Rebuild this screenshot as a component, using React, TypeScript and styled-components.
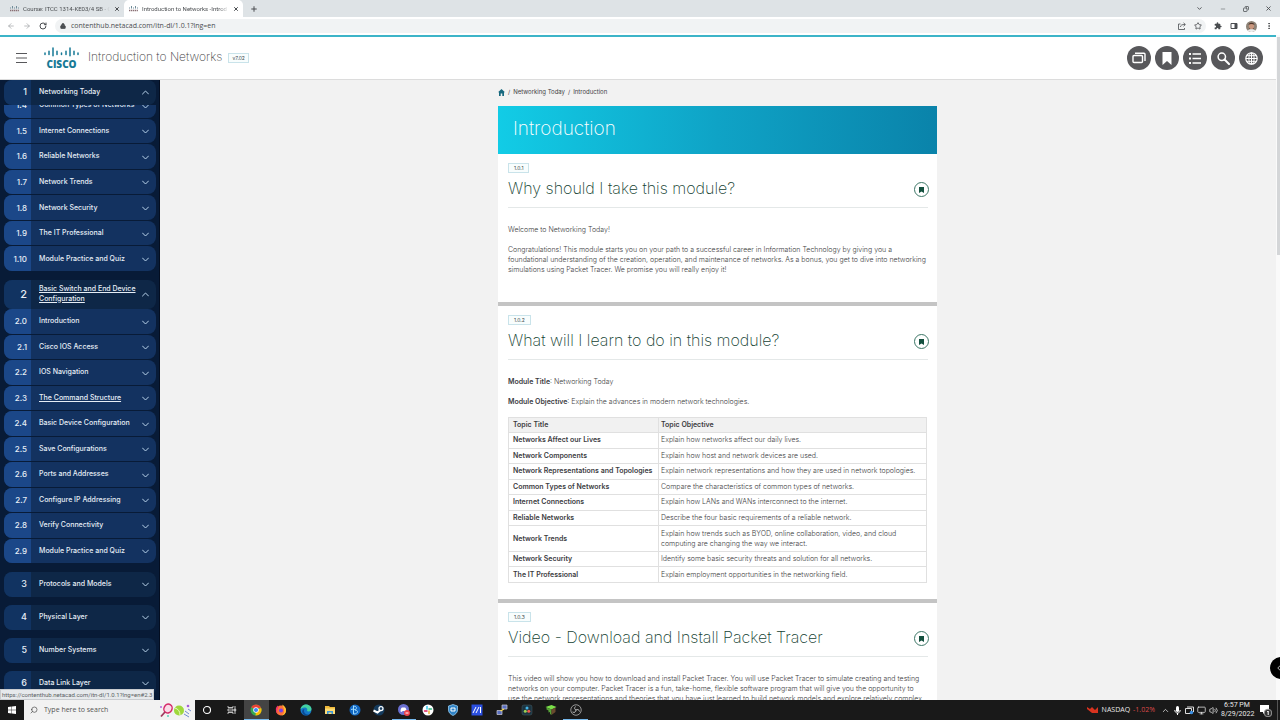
import React from "react";
import styled, { createGlobalStyle } from "styled-components";
import {
  ArrowLeft, ArrowRight, ChevronDown, ChevronLeft, ChevronUp, Lock, Minus, Monitor, MoreVertical,
  Plus, RotateCw, Search, Star, Volume2, X, Copy,
} from "lucide-react";

const ui = `"Open Sans", "Noto Sans", sans-serif`;
const brand = `Inter, "Liberation Sans", sans-serif`;

const Global = createGlobalStyle`
  * { box-sizing: border-box; }
  html, body { margin: 0; padding: 0; overflow: hidden; }
  body { font-family: ${brand}; font-size: 7px; line-height: 10px; color: #3e3e42; background: #f2f2f2; }
  button { border: 0; padding: 0; margin: 0; background: none; color: inherit; font: inherit; display: inline-flex; align-items: center; justify-content: center; cursor: pointer; }
  input { border: 0; padding: 0; margin: 0; background: none; font: inherit; color: inherit; outline: 0; min-width: 0; }
  a { color: inherit; text-decoration: none; }
  h1, h2, p, ul, ol { margin: 0; padding: 0; }
  ul, ol { list-style: none; }
  svg { display: block; flex: none; }
`;

const Screen = styled.div`
  height: 100vh;
  display: flex;
  flex-direction: column;
`;

/* ---------- browser window ---------- */
const TabStrip = styled.div`
  display: flex;
  align-items: stretch;
  height: 17px;
  padding-left: 8px;
  background: #dee3e6;
  font-family: Roboto, ${ui};
  font-size: 6px;
  color: #4a4d50;
`;
const Tab = styled.div<{ $active?: boolean }>`
  display: flex;
  align-items: center;
  gap: 4px;
  width: ${(p) => (p.$active ? 119 : 116)}px;
  padding: 0 4px 0 ${(p) => (p.$active ? 5 : 2)}px;
  border-radius: 5px 5px 0 0;
  background: ${(p) => (p.$active ? "#fff" : "transparent")};
`;
const TabTitle = styled.span`
  flex: 1;
  overflow: hidden;
  white-space: nowrap;
  -webkit-mask-image: linear-gradient(90deg, #000 88%, transparent);
  mask-image: linear-gradient(90deg, #000 88%, transparent);
`;
const NewTab = styled.button`
  margin-left: 7px;
`;
const WindowButtons = styled.div`
  display: flex;
  align-items: center;
  margin-left: auto;
  button { width: 23px; height: 14px; }
`;
const Toolbar = styled.div`
  display: flex;
  align-items: center;
  height: 18px;
  padding: 0 7px 0 7px;
  gap: 8px;
  background: #fff;
  color: #4a4d50;
  font-family: ${ui};
`;
const Omnibox = styled.div`
  flex: 1;
  display: flex;
  align-items: center;
  gap: 5px;
  height: 14px;
  padding: 0 4px 0 5px;
  border-radius: 7px;
  background: #f1f3f4;
  input { flex: 1; }
`;
const OmniActions = styled.div`
  display: flex;
  gap: 8px;
`;

/* ---------- course page ---------- */
const Viewport = styled.div`
  flex: 1;
  min-height: 0;
  display: flex;
  position: relative;
  overflow: hidden;
`;
const Page = styled.div`
  flex: 1;
  min-width: 0;
  display: flex;
  flex-direction: column;
`;
const ScrollTrack = styled.div`
  width: 4px;
  padding: 2px 0;
  background: #fafafa;
`;
const ScrollThumb = styled.div`
  height: 218px;
  width: 3px;
  margin-left: 1px;
  background: #d4d6d8;
`;
const PageHeader = styled.header`
  display: flex;
  align-items: center;
  height: 45px;
  padding: 0 13px 0 16px;
  border-top: 2px solid #3cb4c8;
  border-bottom: 1px solid #dcdcdc;
  background: #fff;
`;
const Logo = styled.a`
  display: flex;
  flex-direction: column;
  align-items: center;
  gap: 2px;
  margin-left: 17px;
  color: #177a96;
  font-family: "Open Sans", sans-serif;
  font-size: 10px;
  font-weight: 800;
  line-height: 10px;
`;
const CourseTitle = styled.span`
  margin: 0 6px 2px 9px;
  font-size: 12px;
  line-height: 16px;
  font-weight: 200;
`;
const Badge = styled.span<{ $wide?: boolean }>`
  display: inline-block;
  padding: 0 ${(p) => (p.$wide ? 5 : 3)}px;
  border: 1px solid #c9e3ea;
  background: #f8fdfd;
  font-size: 5px;
  line-height: 8px;
  color: #3b4a4c;
`;
const HeaderTools = styled.nav`
  display: flex;
  gap: 4px;
  margin-left: auto;
`;
const RoundButton = styled.button`
  width: 24px;
  height: 24px;
  border-radius: 50%;
  background: #58585b;
  color: #fff;
`;
const Columns = styled.div`
  flex: 1;
  min-height: 0;
  display: flex;
`;

/* ---------- course outline ---------- */
const Sidebar = styled.nav`
  width: 160px;
  margin-right: -1px;
  overflow: hidden;
  display: flex;
  flex-direction: column;
  gap: 8px;
  padding: 0 3px 0 4px;
  border-right: 1px solid #030d20;
  background: #081b37;
  color: #e6edf6;
  font-weight: 500;
  z-index: 1;
`;
const Module = styled.div`
  flex: none;
`;
const Row = styled.button<{ $kind: "module" | "topic"; $tall?: boolean }>`
  display: flex;
  width: 100%;
  min-height: ${(p) => (p.$tall ? 29 : p.$kind === "module" ? 25 : 24)}px;
  border-radius: 8px;
  overflow: hidden;
  text-align: left;
  align-items: stretch;
  background: ${(p) => (p.$kind === "module" ? "#0e2747" : "#133260")};
  > span { padding-bottom: ${(p) => (p.$kind === "module" ? 2 : 0)}px; }
  > span:first-child {
    background: ${(p) => (p.$kind === "module" ? "#113361" : "#1b4788")};
    font-size: ${(p) => (p.$tall ? 11 : p.$kind === "module" ? 9 : 8)}px;
  }
`;
const RowNumber = styled.span`
  display: flex;
  align-items: center;
  justify-content: flex-end;
  width: 27px;
  padding-right: 4px;
`;
const RowTitle = styled.span<{ $linked?: boolean }>`
  flex: 1;
  display: flex;
  align-items: center;
  padding-left: 8px;
  line-height: 10px;
  text-decoration: ${(p) => (p.$linked ? "underline" : "none")};
`;
const RowChevron = styled.span`
  display: flex;
  align-items: center;
  padding: 2px 7px 0 0;
  color: #b9d3ea;
`;
const TopicWindow = styled.div<{ $height: number }>`
  display: flex;
  flex-direction: column;
  justify-content: flex-end;
  height: ${(p) => p.$height}px;
  overflow: hidden;
`;
const Topics = styled.ol<{ $height: number }>`
  flex: none;
  display: grid;
  grid-auto-rows: 1fr;
  height: ${(p) => p.$height}px;
  li { display: flex; padding-bottom: 1px; }
`;

/* ---------- lesson ---------- */
const Main = styled.main`
  flex: 1;
  min-width: 0;
  overflow: hidden;
  background: #f2f2f2;
`;
const Lesson = styled.div`
  max-width: 439px;
  margin: 0 auto;
`;
const Crumbs = styled.nav`
  display: flex;
  align-items: center;
  gap: 3px;
  height: 26px;
  padding-bottom: 2px;
  font-size: 6px;
  a:first-child { color: #17697f; }
`;
const Banner = styled.div`
  height: 48px;
  padding: 11px 15px;
  background: linear-gradient(90deg, #12cce6, #0fa3c6 50%, #0a83aa);
  color: #fff;
  h1 { font-size: 19px; line-height: 24px; font-weight: 200; }
`;
const Section = styled.section`
  padding: 9px 10px 0;
  background: #fff;
  border-bottom: 4px solid #c4c4c4;
`;
const SectionHead = styled.div`
  display: flex;
  align-items: center;
  justify-content: space-between;
  height: 35px;
  padding-bottom: 4px;
  margin-right: -1px;
  margin-bottom: 17px;
  border-bottom: 1px solid #e4e8e8;
  h2 { font-size: 16px; line-height: 20px; font-weight: 200; color: #143f32; }
`;
const MarkButton = styled.button`
  width: 15px;
  height: 15px;
  margin: 3px -1px 0 0;
  border: 1px solid #3d7767;
  border-radius: 50%;
  color: #14503f;
`;
const Para = styled.p<{ $gap?: number }>`
  margin-bottom: ${(p) => p.$gap ?? 10}px;
  font-weight: 300;
  white-space: nowrap;
  b { font-weight: 600; color: #3c3c3f; }
`;
const Topicsheet = styled.table`
  width: 419px;
  max-width: 100%;
  height: 166px;
  margin-bottom: 16px;
  border-collapse: collapse;
  th, td { border: 1px solid #e0e0e0; padding: 2px; text-align: left; line-height: 10px; font-weight: 300; }
  th { font-weight: 600; color: #3c3c3f; }
  th:first-child { width: 150px; padding-left: 4px; white-space: nowrap; }
  thead th { background: #f1f1f1; }
`;

/* ---------- overlays ---------- */
const StatusBubble = styled.div`
  position: absolute;
  z-index: 2;
  left: 0;
  bottom: 0;
  padding: 0 1px;
  border: 1px solid #c9ccd0;
  background: #e6e9ec;
  color: #5b5f64;
  font-family: Roboto, ${ui};
  font-size: 6px;
  line-height: 9px;
`;
const SideHandle = styled.button`
  position: absolute;
  right: -12px;
  bottom: 21px;
  width: 22px;
  height: 22px;
  padding-left: 4px;
  justify-content: flex-start;
  border-radius: 50%;
  background: #000;
  color: #ddd;
`;

/* ---------- taskbar ---------- */
const Taskbar = styled.footer`
  display: flex;
  align-items: stretch;
  height: 20px;
  background: #191919;
  color: #e8e8e8;
  font-family: ${ui};
`;
const StartButton = styled.button`
  width: 24px;
`;
const TaskSearch = styled.label`
  display: flex;
  align-items: center;
  gap: 6px;
  width: 171px;
  padding: 0 3px 0 6px;
  background: #f2f2f2;
  color: #444;
  input { flex: 1; }
  input::placeholder { color: #555; opacity: 1; }
`;
const MirroredSearch = styled(Search)`
  transform: scaleX(-1);
`;
const RestoreIcon = styled(Copy)`
  transform: scaleX(-1);
`;
const Apps = styled.div`
  display: grid;
  grid-template-columns: repeat(16, 1fr);
  width: 393px;
`;
const AppButton = styled.button<{ $state?: "open" | "active" }>`
  border-bottom: 1px solid ${(p) => (p.$state ? "#76b9ed" : "transparent")};
  border-top: 1px solid ${(p) => (p.$state === "active" ? "#444" : "transparent")};
  background: ${(p) => (p.$state === "active" ? "#444" : "none")};
`;
const Tray = styled.div`
  display: flex;
  align-items: center;
  gap: 3px;
  margin-left: auto;
  padding-right: 2px;
`;
const Fall = styled.span`
  color: #dc4a4a;
  margin-right: 3px;
`;
const Clock = styled.div`
  width: 32px;
  text-align: center;
  font-family: Roboto, ${ui};
  line-height: 9px;
`;
const Notice = styled.button`
  width: 18px;
  height: 20px;
`;
const DesktopEdge = styled.div`
  align-self: stretch;
  width: 1px;
  background: #555;
`;

const CiscoMark = ({ w, color = "currentColor" }: { w: number; color?: string }) => (
  <svg width={w} height={(w * 10) / 35} viewBox="0 0 35 10" stroke={color} strokeWidth="1.5" strokeLinecap="round">
    <path d="M1 6v1.6M5 4.2v3.4M9 1v7.8M13 4.2v3.4M17.5 6v1.6M22 4.2v3.4M26 1v7.8M30 4.2v3.4M34 6v1.6" />
  </svg>
);

const TabMark = () => (
  <svg width="9" height="6" viewBox="0 0 9 6" fill="none">
    <path d="M.5 1.500v1M2.500 0v2.500M4.500 1.500v1M6.500 0v2.500M8.500 1.500v1" stroke="#6f8b98" />
    <path d="M0 4.500h9" stroke="#8a6f74" strokeWidth="1.500" strokeDasharray="1.300 .6" />
  </svg>
);

const Chev = ({ up }: { up?: boolean }) => (
  <svg width="7" height="5" viewBox="0 0 7 5" fill="none" stroke="currentColor" strokeWidth="1" strokeLinecap="round" strokeLinejoin="round">
    <path d={up ? "M.5 4 3.5 1l3 3" : "M.5 1l3 3 3-3"} />
  </svg>
);

const OutlineRow = ({ n, title, open, linked, kind }: { n: string; title: string; open?: boolean; linked?: boolean; kind: "module" | "topic" }) => (
  <Row $kind={kind} $tall={kind === "module" && linked} aria-expanded={!!open}>
    <RowNumber>{n}</RowNumber>
    <RowTitle $linked={linked}>{title}</RowTitle>
    <RowChevron><Chev up={open} /></RowChevron>
  </Row>
);

const first = [
  ["1.4", "Common Types of Networks"], ["1.5", "Internet Connections"], ["1.6", "Reliable Networks"],
  ["1.7", "Network Trends"], ["1.8", "Network Security"], ["1.9", "The IT Professional"], ["1.10", "Module Practice and Quiz"],
];
const second = [
  ["2.0", "Introduction"], ["2.1", "Cisco IOS Access"], ["2.2", "IOS Navigation"], ["2.3", "The Command Structure"],
  ["2.4", "Basic Device Configuration"], ["2.5", "Save Configurations"], ["2.6", "Ports and Addresses"],
  ["2.7", "Configure IP Addressing"], ["2.8", "Verify Connectivity"], ["2.9", "Module Practice and Quiz"],
];
const rest = [["3", "Protocols and Models"], ["4", "Physical Layer"], ["5", "Number Systems"], ["6", "Data Link Layer"]];

const objectives = [
  ["Networks Affect our Lives", "Explain how networks affect our daily lives."],
  ["Network Components", "Explain how host and network devices are used."],
  ["Network Representations and Topologies", "Explain network representations and how they are used in network topologies."],
  ["Common Types of Networks", "Compare the characteristics of common types of networks."],
  ["Internet Connections", "Explain how LANs and WANs interconnect to the internet."],
  ["Reliable Networks", "Describe the four basic requirements of a reliable network."],
  ["Network Trends", "Explain how trends such as BYOD, online collaboration, video, and cloud computing are changing the way we interact."],
  ["Network Security", "Identify some basic security threats and solution for all networks."],
  ["The IT Professional", "Explain employment opportunities in the networking field."],
];

const Topic = ({ id, title }: { id: string; title: string }) => (
  <>
    <Badge $wide>{id}</Badge>
    <SectionHead>
      <h2>{title}</h2>
      <MarkButton aria-label="Bookmark section">
        <svg width="5" height="6" viewBox="0 0 5 6" fill="currentColor"><path d="M0 0h5v6L2.5 4.4 0 6z" /></svg>
      </MarkButton>
    </SectionHead>
  </>
);

const apps: { name: string; state?: "open" | "active"; art: React.ReactNode }[] = [
  { name: "Cortana", art: <circle cx="12" cy="12" r="7" fill="none" stroke="#fff" strokeWidth="2.2" /> },
  { name: "Task View", art: <path d="M4 4v3h10V4M4 20v-3h10v3M4 10h10v4H4zM18 4v16M16.500 10.500h3v3h-3z" fill="none" stroke="#ddd" strokeWidth="1.700" /> },
  { name: "Chrome", state: "active", art: <><circle cx="12" cy="12" r="11" fill="#34a853" /><path d="M12 12 2.500 6.500A11 11 0 0 1 21.500 6.500L22 8H12z" fill="#ea4335" /><path d="M12 12 22.300 8A11 11 0 0 1 11 23z" fill="#fbbc05" /><circle cx="12" cy="12" r="5.500" fill="#fff" /><circle cx="12" cy="12" r="4.200" fill="#4285f4" /></> },
  { name: "Firefox", art: <><circle cx="12" cy="13" r="10" fill="#ff7139" /><path d="M14 1c6 3 9 8 8 13-1 6-5 9-9 9 6-3 8-10 1-22z" fill="#ffbd2f" /><path d="M2 8c1-2 2-3 3-5l2 4c-3 3-4 9-1 13-4-3-5-8-4-12z" fill="#f5316b" /><circle cx="12" cy="13" r="4" fill="#7542e5" /></> },
  { name: "Edge", art: <><circle cx="12" cy="12" r="11" fill="#1478c9" /><path d="M1 11C2 4 7 1 12 1c7 0 11 5 11 9 0 5-7 6-9 4 2-4-1-7-5-7-4 0-7 2-8 4z" fill="#44d1a0" /><path d="M9 10c-3 5 1 12 9 11-3 2-7 2-10 1-5-4-5-11 1-12z" fill="#0b4a92" /></> },
  { name: "File Explorer", art: <><path d="M2 4h8l2 2h10v14H2z" fill="#f0b93a" /><path d="M2 9h20v11H2z" fill="#ffdc74" /><path d="M6 14h12v6h-3v-3H9v3H6z" fill="#3c96d8" /></> },
  { name: "Battle.net", art: <><circle cx="12" cy="12" r="11" fill="#1268c4" /><path d="M9 3v17M9 5c6-2 8 4 3 7 7 0 7 8-3 8M4 11c3-1 6-1 9 1" stroke="#9fdcff" strokeWidth="2" fill="none" /></> },
  { name: "Steam", art: <><circle cx="12" cy="12" r="11" fill="#153b5d" /><path d="M1 13l8 4 6-5" stroke="#fff" strokeWidth="4" fill="none" /><circle cx="16" cy="9" r="4" fill="#153b5d" stroke="#fff" strokeWidth="2.500" /></> },
  { name: "Discord", state: "open", art: <><circle cx="11" cy="11" r="11" fill="#6a6fd0" /><path d="M5 15c0-4 1-7 3-8h6c2 1 3 4 3 8l-3 1-1-2H9l-1 2z" fill="#fff" /><circle cx="18" cy="18" r="6" fill="#ec4149" /><path d="M15 18h6" stroke="#fff" strokeWidth="2" /></> },
  { name: "Slack", art: <><circle cx="12" cy="12" r="11" fill="#fff" /><g strokeWidth="3" strokeLinecap="round"><path d="M10 5v5" stroke="#36c5f0" /><path d="M14 10h5" stroke="#2eb67d" /><path d="M14 14v5" stroke="#ecb22e" /><path d="M5 14h5" stroke="#e01e5a" /></g></> },
  { name: "Security", art: <><path d="M12 1 21 4v8c0 6-5 9-9 11-4-2-9-5-9-11V4z" fill="#2f83c6" stroke="#9ed3f5" strokeWidth="1.500" /><path d="M8 8h8v6H8z" fill="none" stroke="#fff" strokeWidth="2" /></> },
  { name: "Armoury", art: <><path d="M1 1h22v22H1z" fill="#2b4fe0" /><path d="M4 18 10 6M10 18l6-12M19 6v12" fill="none" stroke="#fff" strokeWidth="2" /></> },
  { name: "PuTTY", art: <><path d="M12 2h10v8H12zM2 13h10v8H2z" fill="#5a6fc0" stroke="#c8c8d0" strokeWidth="1.500" /><path d="M16 10 9 14" stroke="#ffe14a" strokeWidth="2.500" /></> },
  { name: "DaVinci Resolve", art: <><rect x="2" y="2" width="20" height="20" rx="4" fill="#1b3340" stroke="#47606a" /><circle cx="12" cy="8" r="3" fill="#45b4e8" /><circle cx="8.500" cy="14.500" r="3" fill="#9ed052" /><circle cx="15.500" cy="14.500" r="3" fill="#ef5a4c" /></> },
  { name: "Minecraft", art: <><path d="M1 6 13 2l10 4-10 5z" fill="#7be04a" /><path d="M3 7l10 4v11l-3-2v-4l-3 1v-4l-4-2z" fill="#57a337" /><path d="M13 11l8-4v9l-8 6z" fill="#6a4a2e" /></> },
  { name: "OBS Studio", state: "open", art: <><circle cx="12" cy="12" r="10.500" fill="#1c1c1c" stroke="#bbb" strokeWidth="1.500" /><path d="M12 12c-3-1-4-4-1-7M12 12c3-2 6-1 7 3M12 12c0 4-3 6-7 4" stroke="#bbb" strokeWidth="2" fill="none" /></> },
];

export default function App() {
  return (
    <Screen>
      <Global />
      <TabStrip>
        <Tab>
          <TabMark />
          <TabTitle>Course: ITCC 1314-KE03/4 SB - C</TabTitle>
          <button aria-label="Close tab"><X size={6} strokeWidth={4} /></button>
        </Tab>
        <Tab $active>
          <TabMark />
          <TabTitle>Introduction to Networks -Introd</TabTitle>
          <button aria-label="Close tab"><X size={6} strokeWidth={4} /></button>
        </Tab>
        <NewTab aria-label="New tab"><Plus size={8} strokeWidth={3} /></NewTab>
        <WindowButtons>
          <button aria-label="Search tabs"><ChevronDown size={7} strokeWidth={3} /></button>
          <button aria-label="Minimize"><Minus size={6} /></button>
          <button aria-label="Restore"><RestoreIcon size={6} strokeWidth={3} /></button>
          <button aria-label="Close"><X size={7} strokeWidth={3} /></button>
        </WindowButtons>
      </TabStrip>
      <Toolbar>
        <button aria-label="Back"><ArrowLeft size={8} color="#9a9da0" /></button>
        <button aria-label="Forward"><ArrowRight size={8} color="#9a9da0" /></button>
        <button aria-label="Reload"><RotateCw size={8} strokeWidth={3} /></button>
        <Omnibox>
          <Lock size={6} strokeWidth={3} fill="currentColor" />
          <input aria-label="Address" defaultValue="contenthub.netacad.com/itn-dl/1.0.1?lng=en" />
          <OmniActions>
            <button aria-label="Share">
              <svg width="8" height="8" viewBox="0 0 8 8" fill="none" stroke="currentColor" strokeWidth=".8"><path d="M2.500 2H.5v5.500h6V6M2.500 5c0-2 1.500-2.500 4.500-2.500M5.500.8 7.400 2.500 5.500 4.300" /></svg>
            </button>
            <button aria-label="Bookmark page"><Star size={8} strokeWidth={2.5} /></button>
          </OmniActions>
        </Omnibox>
        <button aria-label="Extensions">
          <svg width="8" height="8" viewBox="0 0 24 24" fill="currentColor"><path d="M20.500 11H19V7a2 2 0 0 0-2-2h-4V3.500a2.500 2.500 0 0 0-5 0V5H4a2 2 0 0 0-2 2v3.800h1.500a2.700 2.700 0 0 1 0 5.400H2V20a2 2 0 0 0 2 2h3.800v-1.500a2.700 2.700 0 0 1 5.400 0V22H17a2 2 0 0 0 2-2v-4h1.500a2.500 2.500 0 0 0 0-5z" /></svg>
        </button>
        <button aria-label="Side panel">
          <svg width="8" height="8" viewBox="0 0 8 8"><path d="M1 1.500h6v5H1z" fill="none" stroke="currentColor" /><path d="M4.500 1.500H7v5H4.500z" fill="currentColor" /></svg>
        </button>
        <button aria-label="Profile">
          <svg width="11" height="11" viewBox="0 0 11 11"><circle cx="5.500" cy="5.500" r="5.500" fill="#8d8377" /><ellipse cx="5.500" cy="5" rx="2.700" ry="3.300" fill="#c9977e" /><path d="M2.600 4C2.500 1 8.500 1 8.400 4 7 2.600 4 2.600 2.600 4z" fill="#4a3329" /><path d="M3 6.500c1 2 4 2 5 0v1.500H3z" fill="#6b4a3a" /><path d="M1.500 9.300c2-1.500 6-1.500 8 0a5.500 5.500 0 0 1-8 0z" fill="#eee" /></svg>
        </button>
        <button aria-label="Menu"><MoreVertical size={8} strokeWidth={3} /></button>
      </Toolbar>

      <Viewport>
        <Page>
          <PageHeader>
            <button aria-label="Toggle outline">
              <svg width="11" height="10" viewBox="0 0 11 10" stroke="#58585b"><path d="M0 .5h11M0 5h11M0 9.500h11" /></svg>
            </button>
            <Logo href="#home"><CiscoMark w={35} /><span>CISCO</span></Logo>
            <CourseTitle>Introduction to Networks</CourseTitle>
            <Badge>v7.02</Badge>
            <HeaderTools>
              <RoundButton aria-label="Resources">
                <svg width="14" height="12" viewBox="0 0 14 12" fill="none" stroke="#fff" strokeWidth="1.400" strokeLinejoin="round"><rect x="1" y="3.500" width="9.500" height="7" rx="1" /><path d="M3 1.300h9a1 1 0 0 1 1 1V9" /></svg>
              </RoundButton>
              <RoundButton aria-label="Bookmarks">
                <svg width="10" height="13" viewBox="0 0 10 13" fill="#fff"><path d="M.5 0h9v13L5 9 .5 13z" /></svg>
              </RoundButton>
              <RoundButton aria-label="Index">
                <svg width="12" height="11" viewBox="0 0 12 11" stroke="#fff" strokeWidth="1.300"><path d="M3.500 1h8.500M3.500 5.500h8.500M3.500 10h8.500" /><path d="M0 1h2M0 5.500h2M0 10h2" strokeWidth="2" /></svg>
              </RoundButton>
              <RoundButton aria-label="Search">
                <svg width="13" height="13" viewBox="0 0 13 13" fill="none" stroke="#fff"><circle cx="4.800" cy="4.800" r="3.700" strokeWidth="1.500" /><path d="M7.500 7.500 12 12" strokeWidth="2" strokeLinecap="round" /></svg>
              </RoundButton>
              <RoundButton aria-label="Language">
                <svg width="13" height="13" viewBox="0 0 13 13" fill="none" stroke="#fff"><circle cx="6.500" cy="6.500" r="5.700" strokeWidth="1.200" /><ellipse cx="6.500" cy="6.500" rx="2.600" ry="5.700" /><path d="M6.500 1v11M1 6.500h11M1.800 3.700h9.400M1.800 9.300h9.400" /></svg>
              </RoundButton>
            </HeaderTools>
          </PageHeader>

          <Columns>
            <Sidebar aria-label="Course outline">
              <Module>
                <OutlineRow kind="module" n="1" title="Networking Today" open />
                <TopicWindow $height={167}>
                  <Topics $height={179}>
                    {first.map(([n, t]) => <li key={n}><OutlineRow kind="topic" n={n} title={t} /></li>)}
                  </Topics>
                </TopicWindow>
              </Module>
              <Module>
                <OutlineRow kind="module" n="2" title="Basic Switch and End Device Configuration" open linked />
                <Topics $height={255}>
                  {second.map(([n, t]) => <li key={n}><OutlineRow kind="topic" n={n} title={t} linked={n === "2.3"} /></li>)}
                </Topics>
              </Module>
              {rest.map(([n, t]) => <Module key={n}><OutlineRow kind="module" n={n} title={t} /></Module>)}
            </Sidebar>

            <Main>
              <Lesson>
                <Crumbs aria-label="Breadcrumb">
                  <a href="#home" aria-label="Home">
                    <svg width="7" height="7" viewBox="0 0 7 7" fill="currentColor"><path d="M3.500 0 7 3.200H6V7H4.300V4.500H2.700V7H1V3.200H0z" /></svg>
                  </a>
                  <span>/</span><a href="#module">Networking Today</a><span>/</span><span>Introduction</span>
                </Crumbs>
                <Banner><h1>Introduction</h1></Banner>
                <Section>
                  <Topic id="1.0.1" title="Why should I take this module?" />
                  <Para>Welcome to Networking Today!</Para>
                  <Para $gap={27}>
                    Congratulations! This module starts you on your path to a successful career in Information Technology by giving you a<br />
                    foundational understanding of the creation, operation, and maintenance of networks. As a bonus, you get to dive into networking<br />
                    simulations using Packet Tracer. We promise you will really enjoy it!
                  </Para>
                </Section>
                <Section>
                  <Topic id="1.0.2" title="What will I learn to do in this module?" />
                  <Para><b>Module Title</b>: Networking Today</Para>
                  <Para><b>Module Objective</b>: Explain the advances in modern network technologies.</Para>
                  <Topicsheet>
                    <thead><tr><th scope="col">Topic Title</th><th scope="col">Topic Objective</th></tr></thead>
                    <tbody>
                      {objectives.map(([t, o]) => <tr key={t}><th scope="row">{t}</th><td>{o}</td></tr>)}
                    </tbody>
                  </Topicsheet>
                </Section>
                <Section>
                  <Topic id="1.0.3" title="Video - Download and Install Packet Tracer" />
                  <Para>
                    This video will show you how to download and install Packet Tracer. You will use Packet Tracer to simulate creating and testing<br />
                    networks on your computer. Packet Tracer is a fun, take-home, flexible software program that will give you the opportunity to<br />
                    use the network representations and theories that you have just learned to build network models and explore relatively complex
                  </Para>
                </Section>
              </Lesson>
            </Main>
          </Columns>
        </Page>
        <ScrollTrack><ScrollThumb /></ScrollTrack>
        <StatusBubble>https://contenthub.netacad.com/itn-dl/1.0.1?lng=en#2.3</StatusBubble>
        <SideHandle aria-label="Open panel"><ChevronLeft size={10} /></SideHandle>
      </Viewport>

      <Taskbar>
        <StartButton aria-label="Start">
          <svg width="8" height="8" viewBox="0 0 8 8" fill="#fff"><path d="M0 1l3.600-.5v3.300H0zM4 .4 8 0v3.800H4zM0 4.200h3.600v3.300L0 7zM4 4.200h4V8l-4-.4z" /></svg>
        </StartButton>
        <TaskSearch>
          <MirroredSearch size={8} />
          <input aria-label="Search the computer" placeholder="Type here to search" />
          <svg width="33" height="16" viewBox="0 0 33 16">
            <ellipse cx="9" cy="6.500" rx="4" ry="4.500" fill="#f8dce8" stroke="#d62b6a" strokeWidth="1.500" transform="rotate(30 9 6.500)" />
            <path d="M6 10l-4 4.500" stroke="#a03a5e" strokeWidth="1.800" />
            <circle cx="20" cy="8.500" r="5" fill="#9fd83c" /><path d="M16 6c3 1 5 3 5 7" stroke="#e8f8c0" fill="none" />
            <path d="M26 9l4 3M25 12l5 3M29 7l3 2" stroke="#6f8bd0" /><circle cx="29" cy="4" r="1.300" fill="#a55ad8" /><circle cx="2" cy="5" r="1" fill="#b06ae0" /><circle cx="9" cy="14" r="1" fill="#5ad0b8" />
          </svg>
        </TaskSearch>
        <Apps>
          {apps.map((a) => (
            <AppButton key={a.name} $state={a.state} aria-label={a.name}>
              <svg width="12" height="12" viewBox="0 0 24 24">{a.art}</svg>
            </AppButton>
          ))}
        </Apps>
        <Tray>
          <svg width="12" height="8" viewBox="0 0 12 8"><path d="M0 1l3 2 2-2 3 3 3-3v6H5L0 3z" fill="#d8331f" /></svg>
          <span>NASDAQ</span>
          <Fall>-1.02%</Fall>
          <ChevronUp size={9} />
          <svg width="9" height="9" viewBox="0 0 9 9"><rect x="3" y="0" width="3" height="6" rx="1.500" fill="#fff" /><path d="M1.800 4c0 4 5.400 4 5.400 0M4.500 7v2" stroke="#fff" fill="none" /></svg>
          <svg width="9" height="9" viewBox="0 0 9 9" fill="none" stroke="#ddd"><path d="M.5 2.500h6v5h-6zM2 1h6.500v5" /><circle cx="6.500" cy="6.500" r="1.800" fill="#3a8de0" stroke="none" /></svg>
          <Monitor size={9} />
          <Volume2 size={9} />
          <Clock>6:57 PM<br />8/29/2022</Clock>
          <Notice aria-label="Notifications">
            <svg width="13" height="13" viewBox="0 0 13 13"><path d="M1 1h9v7H6L4 10V8H1z" fill="#fff" /><circle cx="9" cy="9" r="3.800" fill="#333" stroke="#999" /><path d="M8.200 8 9.200 7v4" stroke="#fff" fill="none" /></svg>
          </Notice>
          <DesktopEdge />
        </Tray>
      </Taskbar>
    </Screen>
  );
}
